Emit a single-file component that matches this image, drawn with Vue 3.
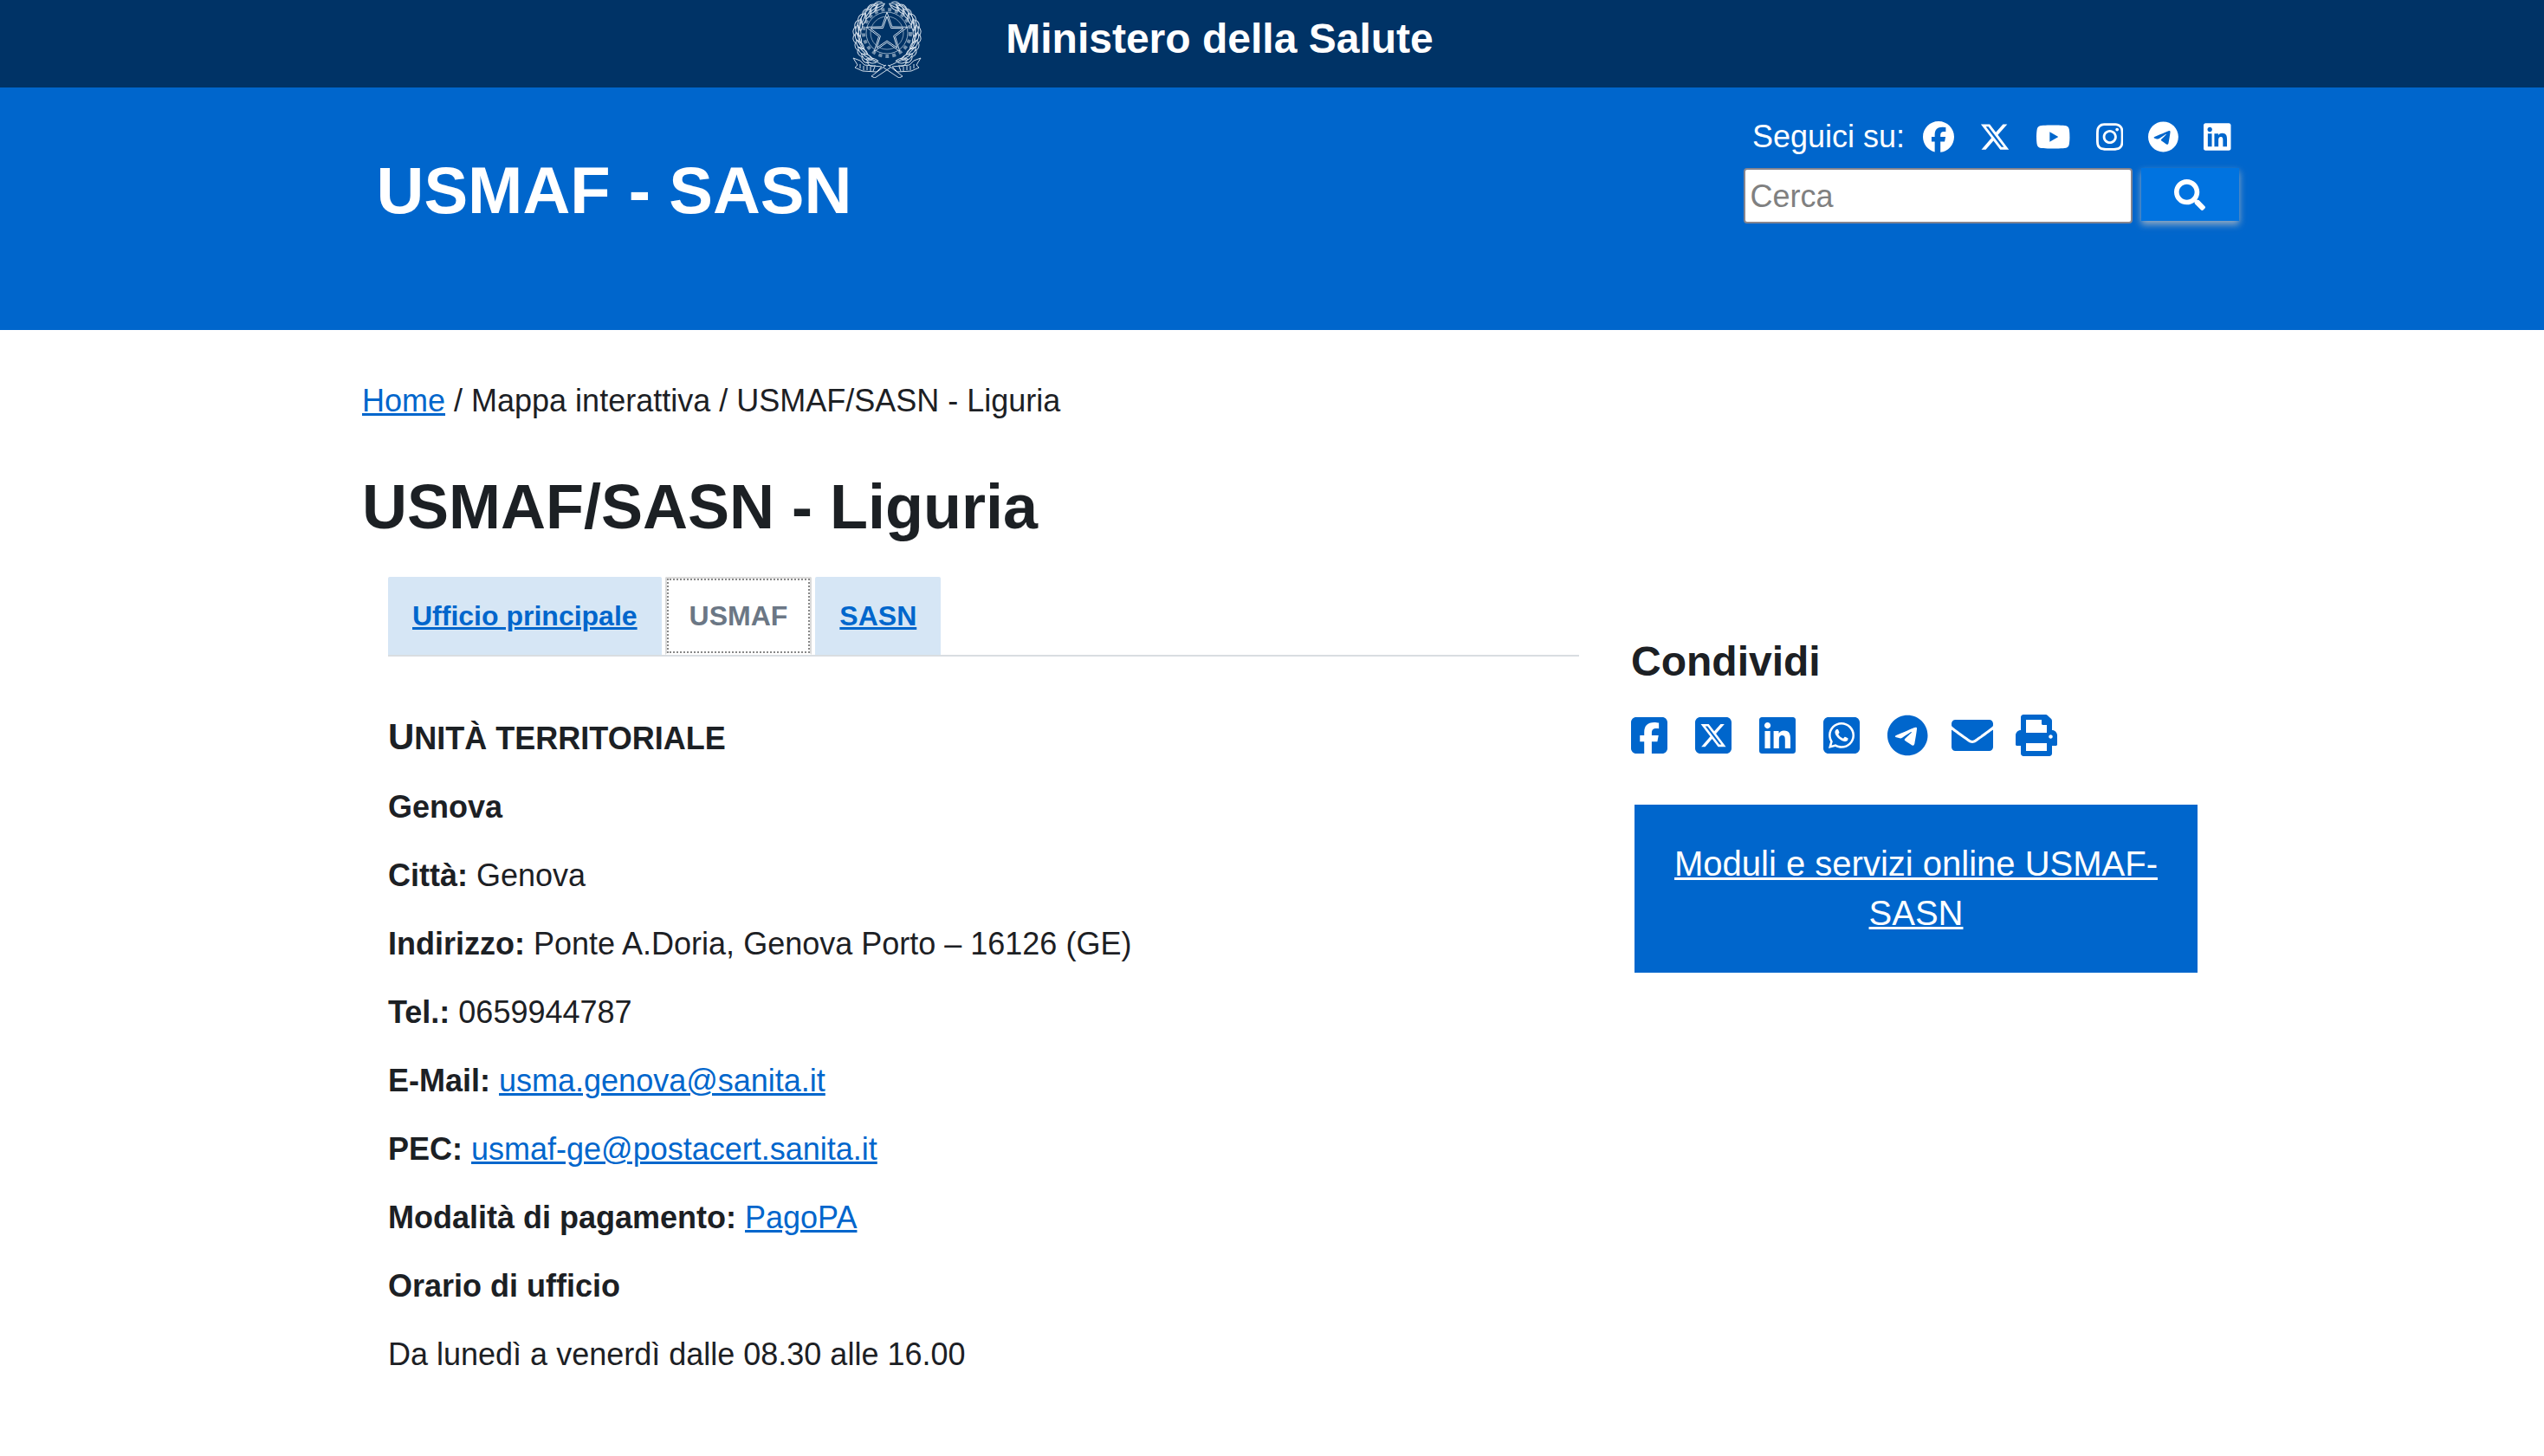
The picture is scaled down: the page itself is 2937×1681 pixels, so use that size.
<script setup>
import { ref } from 'vue'

const query = ref('')

// Star points of the state emblem, inner and outer radii around the centre
const star = (cx, cy, outer, inner) =>
  Array.from({ length: 10 }, (_, i) => {
    const r = i % 2 ? inner : outer
    const a = (Math.PI / 5) * i - Math.PI / 2
    return `${(cx + r * Math.cos(a)).toFixed(1)},${(cy + r * Math.sin(a)).toFixed(1)}`
  }).join(' ')

// Leaves running up the two branches of the wreath
const leaves = Array.from({ length: 11 }, (_, i) => {
  const a = 2.1 + i * 0.235
  return {
    x: Math.round(40 + 33 * Math.cos(a)),
    y: Math.round(41 + 34 * Math.sin(a)),
    turn: Math.round((a * 180) / Math.PI),
  }
})

const paths = {
  facebook: { box: '0 0 512 512', d: 'M512 256C512 114.6 397.4 0 256 0S0 114.6 0 256C0 376 82.7 476.8 194.2 504.5V334.2H141.4V256h52.8V222.3c0-87.1 39.4-127.5 125-127.5c16.200 0 44.200 3.200 55.700 6.400V172c-6-.6-16.500-1-29.600-1c-42 0-58.200 15.900-58.200 57.200V256h83.600l-14.400 78.200H287V510.100C413.800 494.800 512 386.900 512 256z' },
  x: { box: '0 0 512 512', d: 'M389.200 48h70.600L305.600 224.200 487 464H345L233.700 318.600 106.500 464H35.800L200.700 275.500 26.800 48H172.400L272.900 180.900 389.200 48zM364.400 421.800h39.100L151.100 88h-42L364.400 421.800z' },
  youtube: { box: '0 0 576 512', d: 'M549.655 124.083c-6.281-23.650-24.787-42.276-48.284-48.597C458.781 64 288 64 288 64S117.220 64 74.629 75.486c-23.497 6.322-42.003 24.947-48.284 48.597-11.412 42.867-11.412 132.305-11.412 132.305s0 89.438 11.412 132.305c6.281 23.650 24.787 41.500 48.284 47.821C117.220 448 288 448 288 448s170.780 0 213.371-11.486c23.497-6.321 42.003-24.171 48.284-47.821 11.412-42.867 11.412-132.305 11.412-132.305s0-89.438-11.412-132.305zm-317.510 213.508V175.185l142.739 81.205-142.739 81.201z' },
  instagram: { box: '0 0 448 512', d: 'M224.100 141c-63.600 0-114.900 51.300-114.900 114.900s51.300 114.900 114.900 114.900S339 319.500 339 255.900 287.700 141 224.100 141zm0 189.600c-41.100 0-74.700-33.500-74.700-74.700s33.500-74.700 74.700-74.700 74.700 33.500 74.700 74.700-33.600 74.700-74.700 74.700zm146.400-194.300c0 14.900-12 26.800-26.800 26.800-14.900 0-26.800-12-26.800-26.800s12-26.800 26.800-26.800 26.800 12 26.800 26.800zm76.100 27.200c-1.700-35.900-9.900-67.700-36.200-93.900-26.200-26.200-58-34.400-93.900-36.200-37-2.100-147.900-2.100-184.900 0-35.800 1.700-67.600 9.900-93.900 36.100s-34.400 58-36.200 93.900c-2.100 37-2.100 147.900 0 184.900 1.700 35.900 9.900 67.700 36.200 93.900s58 34.400 93.900 36.200c37 2.100 147.900 2.100 184.900 0 35.900-1.700 67.700-9.900 93.900-36.200 26.200-26.200 34.400-58 36.200-93.900 2.100-37 2.100-147.800 0-184.800zM398.800 388c-7.800 19.600-22.900 34.700-42.600 42.600-29.500 11.700-99.500 9-132.100 9s-102.700 2.600-132.100-9c-19.600-7.800-34.700-22.900-42.600-42.600-11.700-29.500-9-99.500-9-132.100s-2.600-102.700 9-132.100c7.800-19.600 22.900-34.700 42.600-42.600 29.500-11.700 99.500-9 132.100-9s102.700-2.600 132.100 9c19.600 7.800 34.700 22.900 42.600 42.600 11.700 29.500 9 99.500 9 132.100s2.700 102.700-9 132.100z' },
  telegram: { box: '0 0 496 512', d: 'M248 8C111 8 0 119 0 256S111 504 248 504 496 393 496 256 385 8 248 8zM363 176.700c-3.700 39.200-19.900 134.400-28.100 178.300-3.500 18.600-10.300 24.800-16.900 25.400-14.400 1.300-25.300-9.500-39.300-18.700-21.800-14.300-34.200-23.200-55.300-37.200-24.500-16.100-8.600-25 5.300-39.500 3.700-3.800 67.100-61.500 68.300-66.700 .2-.7 .3-3.100-1.200-4.400s-3.600-.8-5.100-.5q-3.300 .7-104.600 69.100-14.800 10.200-26.900 9.900c-8.900-.2-25.900-5-38.600-9.100-15.500-5-27.900-7.700-26.800-16.300q.8-6.700 18.500-13.700 108.400-47.200 144.600-62.300c68.900-28.600 83.200-33.600 92.500-33.800 2.100 0 6.600 .5 9.600 2.900a10.500 10.500 0 0 1 3.500 6.700A43.800 43.800 0 0 1 363 176.700z' },
  linkedin: { box: '0 0 448 512', d: 'M416 32H31.900C14.300 32 0 46.500 0 64.300v383.400C0 465.500 14.300 480 31.900 480H416c17.600 0 32-14.500 32-32.300V64.300c0-17.800-14.400-32.300-32-32.300zM135.400 416H69V202.200h66.500V416zm-33.200-243c-21.300 0-38.500-17.300-38.500-38.500S80.900 96 102.200 96c21.200 0 38.500 17.300 38.500 38.500 0 21.300-17.200 38.500-38.500 38.500zm282.100 243h-66.400V312c0-24.800-.5-56.700-34.500-56.700-34.600 0-39.900 27-39.900 54.900V416h-66.400V202.200h63.700v29.200h.9c8.900-16.800 30.600-34.500 62.900-34.500 67.200 0 79.700 44.300 79.700 101.900V416z' },
  facebookSquare: { box: '0 0 448 512', d: 'M64 32C28.700 32 0 60.700 0 96V416c0 35.300 28.700 64 64 64h98.200V334.200H109.400V256h52.800V222.300c0-87.100 39.400-127.500 125-127.500c16.200 0 44.200 3.200 55.700 6.400V172c-6-.6-16.500-1-29.600-1c-42 0-58.200 15.900-58.200 57.200V256h83.600l-14.400 78.200H255V480H384c35.300 0 64-28.700 64-64V96c0-35.300-28.700-64-64-64H64z' },
  xSquare: { box: '0 0 448 512', d: 'M64 32C28.700 32 0 60.700 0 96V416c0 35.300 28.700 64 64 64H384c35.300 0 64-28.700 64-64V96c0-35.300-28.700-64-64-64H64zm297.100 84L257.300 234.600 379.400 396H283.800L209 298.100 123.300 396H75.800l111-126.900L69.700 116h98l67.700 89.500L313.600 116h47.500zM323.300 367.600L153.400 142.900H125.100L296.900 367.600h26.300z' },
  whatsappSquare: { box: '0 0 448 512', d: 'M92.100 254.600c0 24.900 7 49.200 20.200 70.100l3.100 5-13.300 48.600L152 365.200l4.800 2.900c20.200 12 43.400 18.400 67.100 18.400h.1c72.600 0 133.300-59.100 133.300-131.800c0-35.200-15.200-68.300-40.100-93.200c-25-25-58-38.700-93.200-38.700c-72.700 0-131.800 59.100-131.900 131.800zM274.800 330c-12.600 1.900-22.400 .9-47.500-9.900c-36.800-15.900-61.800-51.500-66.900-58.700c-.4-.6-.7-.9-.8-1.100c-2-2.600-16.200-21.500-16.200-41c0-18.400 9-27.900 13.200-32.300c.3-.3 .5-.5 .7-.8c3.600-4 7.900-5 10.600-5c2.600 0 5.300 0 7.600 .1c.3 0 .5 0 .8 0c2.300 0 5.200 0 8.100 6.800c1.200 2.900 3 7.300 4.900 11.800c3.300 8 6.700 16.300 7.300 17.600c1 2 1.700 4.300 .3 6.900c-3.400 6.800-6.900 10.400-9.300 13c-3.100 3.200-4.500 4.700-2.300 8.600c15.300 26.300 30.600 35.400 53.900 47.100c4 2 6.300 1.700 8.600-1c2.300-2.600 9.900-11.600 12.500-15.500c2.600-4 5.300-3.300 8.900-2s23.100 10.900 27.100 12.900c.8 .4 1.500 .7 2.100 1c2.800 1.400 4.700 2.300 5.500 3.600c.9 1.900 .9 9.900-2.400 19.100c-3.300 9.300-19.100 17.700-26.700 18.800zM448 96c0-35.300-28.700-64-64-64H64C28.700 32 0 60.700 0 96V416c0 35.300 28.700 64 64 64H384c35.300 0 64-28.700 64-64V96zM148.100 393.900L64 416l22.500-82.200c-13.900-24-21.200-51.300-21.200-79.300C65.400 167.100 136.500 96 223.900 96c42.400 0 82.200 16.500 112.200 46.500c29.900 30 47.900 69.800 47.900 112.200c0 87.400-72.700 158.500-160.100 158.500c-26.600 0-52.700-6.700-75.800-19.300z' },
  envelope: { box: '0 0 512 512', d: 'M502.300 190.800c3.900-3.100 9.700-.2 9.700 4.700V400c0 26.500-21.500 48-48 48H48c-26.500 0-48-21.500-48-48V195.600c0-5 5.700-7.800 9.700-4.700 22.400 17.400 52.100 39.500 154.100 113.600 21.100 15.400 56.700 47.800 92.200 47.600 35.700.3 72-32.800 92.300-47.600 102-74.100 131.600-96.300 154-113.700zM256 320c23.200.4 56.600-29.200 73.400-41.400 132.700-96.300 142.800-104.700 173.400-128.700 5.800-4.500 9.200-11.500 9.200-18.900v-19c0-26.500-21.500-48-48-48H48c-26.500 0-48 21.500-48 48v19c0 7.400 3.400 14.300 9.200 18.900 30.600 23.900 40.700 32.400 173.400 128.700 16.800 12.200 50.200 41.800 73.400 41.400z' },
  print: { box: '0 0 512 512', d: 'M448 192V77.250c0-8.490-3.370-16.620-9.370-22.630L393.370 9.370c-6-6-14.140-9.370-22.630-9.370H96C78.330 0 64 14.330 64 32v160c-35.350 0-64 28.650-64 64v112c0 8.840 7.160 16 16 16h48v96c0 17.670 14.330 32 32 32h320c17.670 0 32-14.330 32-32v-96h48c8.840 0 16-7.160 16-16V256c0-35.350-28.650-64-64-64zm-64 256H128v-96h256v96zm0-224H128V64h192v48c0 8.840 7.160 16 16 16h48v96zm48 72c-13.250 0-24-10.750-24-24 0-13.260 10.750-24 24-24s24 10.740 24 24c0 13.250-10.750 24-24 24z' },
  search: { box: '0 0 512 512', d: 'M505 442.700L405.300 343c-4.500-4.500-10.600-7-17-7H372c27.600-35.300 44-79.700 44-128C416 93.100 322.900 0 208 0S0 93.100 0 208s93.100 208 208 208c48.300 0 92.700-16.400 128-44v16.300c0 6.400 2.500 12.500 7 17l99.700 99.700c9.400 9.400 24.600 9.400 33.900 0l28.300-28.300c9.400-9.400 9.400-24.600.1-34zM208 336c-70.700 0-128-57.200-128-128 0-70.700 57.200-128 128-128 70.700 0 128 57.200 128 128 0 70.700-57.200 128-128 128z' },
}

const social = [
  ['facebook', 'Facebook'],
  ['x', 'X'],
  ['youtube', 'YouTube'],
  ['instagram', 'Instagram'],
  ['telegram', 'Telegram'],
  ['linkedin', 'LinkedIn'],
]

const share = [
  ['facebookSquare', 'Facebook'],
  ['xSquare', 'X'],
  ['linkedin', 'LinkedIn'],
  ['whatsappSquare', 'WhatsApp'],
  ['telegram', 'Telegram'],
  ['envelope', 'E-mail'],
  ['print', 'Stampa'],
]

const rows = [
  { label: 'Genova' },
  { label: 'Città:', text: 'Genova' },
  { label: 'Indirizzo:', text: 'Ponte A.Doria, Genova Porto – 16126 (GE)' },
  { label: 'Tel.:', text: '0659944787' },
  { label: 'E-Mail:', link: 'usma.genova@sanita.it' },
  { label: 'PEC:', link: 'usmaf-ge@postacert.sanita.it' },
  { label: 'Modalità di pagamento:', link: 'PagoPA' },
  { label: 'Orario di ufficio' },
  { text: 'Da lunedì a venerdì dalle 08.30 alle 16.00' },
]
</script>

<template>
  <div class="page">
    <div class="topbar">
      <svg class="emblem" viewBox="0 0 80 90" fill="none" stroke="#d3deea" aria-hidden="true">
        <circle cx="40" cy="38" r="27" stroke-width="4" stroke-dasharray="4 4" opacity=".55" />
        <circle cx="40" cy="38" r="24" stroke-width="1" opacity=".7" />
        <circle cx="40" cy="38" r="19" stroke-width="1" opacity=".6" />
        <polygon :points="star(40, 39, 25, 10)" fill="#003366" stroke-width="1" />
        <polygon :points="star(40, 39, 20, 8)" stroke-width="1" />
        <g v-for="side in [1, -1]" :key="side" :transform="side < 0 ? 'translate(80 0) scale(-1 1)' : null">
          <path d="M38 76C14 68 3 45 9 25C12 13 21 5 30 4" stroke-width="1" />
          <g v-for="leaf in leaves" :key="leaf.turn" :transform="`translate(${leaf.x} ${leaf.y}) rotate(${leaf.turn})`">
            <path d="M-3 -6C3 -4 5 1 2 7C-2 4 -4 -1 -3 -6zM-1 -4L1 5" stroke-width="1" />
            <path d="M3 -6C7 -3 7 1 4 5" stroke-width="1" />
          </g>
          <path d="M1 67L9 70L14 75L34 77L28 83L12 82L3 78L6 75zM9 74V79M13 76V81M17 76V81M21 77V82M26 77L24 82M39 75L22 88L26 90L44 78" stroke-width="1" />
        </g>
      </svg>
      <span class="ministry">Ministero della Salute</span>
    </div>

    <header class="header">
      <div class="header-inner">
        <div class="site-title">USMAF - SASN</div>
        <div class="tools">
          <div class="follow">
            <span>Seguici su:</span>
            <a v-for="[icon, name] in social" :key="icon" href="#" :aria-label="name">
              <svg :viewBox="paths[icon].box"><path :d="paths[icon].d" /></svg>
            </a>
          </div>
          <form class="search" @submit.prevent>
            <input v-model="query" type="text" placeholder="Cerca" aria-label="Cerca" />
            <button type="submit" aria-label="Avvia la ricerca">
              <svg :viewBox="paths.search.box"><path :d="paths.search.d" /></svg>
            </button>
          </form>
        </div>
      </div>
    </header>

    <main class="main">
      <nav class="breadcrumb"><a href="#">Home</a> / Mappa interattiva / USMAF/SASN - Liguria</nav>
      <h1>USMAF/SASN - Liguria</h1>
      <div class="columns">
        <section class="office">
          <nav class="tabs">
            <a href="#">Ufficio principale</a>
            <a href="#" class="active" aria-current="page">USMAF</a>
            <a href="#">SASN</a>
          </nav>
          <h2>Unità territoriale</h2>
          <p v-for="row in rows" :key="row.label">
            <strong v-if="row.label">{{ row.label }}</strong>
            {{ row.text }}
            <a v-if="row.link" href="#">{{ row.link }}</a>
          </p>
        </section>
        <aside>
          <h3>Condividi</h3>
          <div class="share">
            <a v-for="[icon, name] in share" :key="icon" href="#" :aria-label="name">
              <svg :viewBox="paths[icon].box"><path :d="paths[icon].d" /></svg>
            </a>
          </div>
          <div class="promo"><a href="#">Moduli e servizi online USMAF-SASN</a></div>
        </aside>
      </div>
    </main>
  </div>
</template>

<style>
body {
  margin: 0;
  background: #fff;
}
</style>

<style scoped>
.page {
  font-family: "Liberation Sans", Arial, sans-serif;
  font-size: 36px;
  line-height: 54px;
  color: #1c2024;
}
.page *,
.page {
  box-sizing: border-box;
}
a {
  color: #0066cc;
  text-decoration-thickness: 3px;
}
svg {
  display: block;
  fill: currentColor;
}
.topbar {
  display: flex;
  justify-content: center;
  gap: 97px;
  padding: 0 314px 11px 16px;
  background: #003366;
  color: #fff;
}
.emblem {
  width: 80px;
  height: 90px;
  fill: none;
}
.ministry {
  font-size: 48px;
  font-weight: 700;
  line-height: 90px;
}
.header {
  background: #0066cc;
  color: #fff;
}
.header-inner {
  display: flex;
  justify-content: space-between;
  max-width: 2232px;
  min-height: 280px;
  margin: 0 auto;
  padding: 30px 0 0 82px;
}
.site-title {
  margin-top: 32px;
  font-size: 76px;
  font-weight: 700;
  line-height: 114px;
}
.follow {
  display: flex;
  align-items: center;
  justify-content: flex-end;
  gap: 29px;
  padding-right: 9px;
}
.follow span {
  margin-right: -8px;
}
.follow a {
  color: #fff;
}
.follow svg {
  height: 36px;
}
.search {
  display: flex;
  gap: 10px;
  margin-top: 9px;
}
.search input {
  width: 449px;
  height: 64px;
  padding: 4px 6px 2px;
  border: 2px solid #85858f;
  border-radius: 4px;
  background: #fff;
  color: #1c2024;
  font: inherit;
}
.search input::placeholder {
  color: #808080;
  opacity: 1;
}
.search button {
  display: flex;
  align-items: center;
  justify-content: center;
  width: 113px;
  height: 61px;
  padding: 0;
  border: 0;
  background: #0073e0;
  color: #fff;
  box-shadow: 0 4px 8px rgba(190, 190, 190, 0.8);
}
.search svg {
  width: 36px;
  height: 36px;
}
.main {
  max-width: 2161px;
  margin: 0 auto;
  padding: 55px 0 40px 30px;
}
h1,
h2,
h3,
p {
  margin: 0;
}
h1 {
  margin-top: 50px;
  font-size: 72px;
  line-height: 90px;
}
.columns {
  display: grid;
  grid-template-columns: 1435fr 666fr;
  gap: 30px;
  margin-top: 36px;
}
.office {
  padding: 0 30px;
}
.tabs {
  display: flex;
  gap: 4px;
  border-bottom: 2px solid #d9dde1;
  font-size: 32px;
  font-weight: 700;
  line-height: 48px;
}
.tabs a {
  padding: 21px 28px;
  border-radius: 2px 2px 0 0;
  background: #d6e6f5;
}
.tabs .active {
  padding: 19px 26px;
  border: 2px solid #dadada;
  border-bottom-color: #fff;
  outline: 2px dotted #888;
  outline-offset: -4px;
  background: #fff;
  color: #6b7785;
  text-decoration: none;
}
h2 {
  margin: 65px 0 22px;
  font-size: 36px;
  line-height: 60px;
  text-transform: uppercase;
}
h2::first-letter {
  font-size: 42px;
  line-height: 48px;
}
p {
  margin-bottom: 25px;
}
h3 {
  margin-top: 65px;
  font-size: 48px;
  line-height: 66px;
}
.share {
  display: flex;
  gap: 26px;
  margin-top: 28px;
}
.share a {
  width: 48px;
}
.share svg {
  height: 48px;
}
.promo {
  margin: 56px 12px 0 4px;
  padding: 40px;
  background: #0066cc;
  font-size: 40px;
  line-height: 57px;
  text-align: center;
}
.promo a {
  color: #fff;
}
</style>
